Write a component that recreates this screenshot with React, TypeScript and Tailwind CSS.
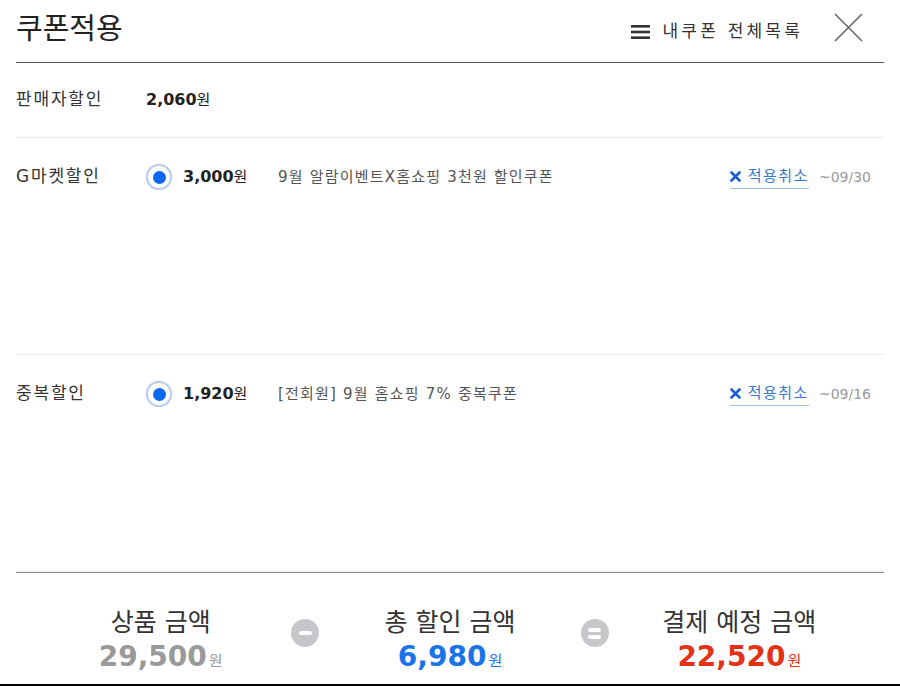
const FONT = '"DejaVu Sans", "Noto Sans CJK KR", sans-serif';

const Radio = () => (
    <span className="flex h-[26px] w-[26px] items-center justify-center rounded-full border-2 border-[#b8cde9] bg-white shadow-[0_0_2px_#d6e3f5]">
        <span className="h-[13px] w-[13px] rounded-full bg-[#0b66f0]" />
    </span>
);

const CancelLink = ({ until }: { until: string }) => (
    <div className="ml-auto flex items-center gap-[10px] pr-[13px]">
        <span className="flex items-center gap-[7px] border-b border-[#9cc0ea] pb-[1px] text-[15px] text-[#3a78c9]">
            <svg width="11" height="11" viewBox="0 0 11 11">
                <path d="M1.5 1.5 L9.5 9.5 M9.5 1.5 L1.5 9.5" stroke="#1a5fd2" strokeWidth="2.6" strokeLinecap="round" />
            </svg>
            <span className="tracking-[1.5px]">적용취소</span>
        </span>
        <span className="text-[14px] text-[#999]">~{until}</span>
    </div>
);

const CouponRow = ({ label, amount, desc, until }: { label: string; amount: string; desc: string; until: string }) => (
    <div className="flex h-[217px] items-start border-b border-[#ececec] pt-[26px]">
        <div className="flex h-[26px] w-full items-center">
            <span className="w-[130px] text-[17px] tracking-[1.8px] text-[#333]">{label}</span>
            <Radio />
            <span className="ml-[11px] w-[95px] text-[#222]">
                <b className="text-[16px]">{amount}</b>
                <span className="text-[15px]">원</span>
            </span>
            <span className="text-[15px] tracking-[1.2px] text-[#555]">{desc}</span>
            <CancelLink until={until} />
        </div>
    </div>
);

const OpCircle = ({ kind }: { kind: "minus" | "equals" }) => (
    <div className="flex w-0 justify-center pt-[46px]">
        <span className="flex h-[28px] w-[28px] shrink-0 flex-col items-center justify-center gap-[3px] rounded-full bg-[#c7c7cb]">
            <span className="h-[4px] w-[13px] rounded-full bg-white" />
            {kind === "equals" && <span className="h-[4px] w-[13px] rounded-full bg-white" />}
        </span>
    </div>
);

const Summary = ({ label, value, color }: { label: string; value: string; color: string }) => (
    <div className="flex flex-1 flex-col items-center pt-[33px]">
        <span className="text-[25px] leading-[34px] text-[#333]">{label}</span>
        <span className={`flex items-baseline leading-[34px] ${color}`}>
            <b className="text-[28px]">{value}</b>
            <span className="ml-[2px] text-[15px]">원</span>
        </span>
    </div>
);

export default function App() {
    return (
        <div className="h-[686px] w-[900px] bg-white" style={{ fontFamily: FONT }}>
            <div className="flex h-[686px] flex-col border-b-2 border-black px-4">
                <div className="flex h-[63px] items-start border-b border-[#555]">
                    <h1 className="pt-[10px] text-[29px] leading-[38px] text-[#222]">쿠폰적용</h1>
                    <div className="ml-auto flex items-center pt-[19px]">
                        <svg width="20" height="16" viewBox="0 0 20 16" className="mr-[12px]">
                            <rect x="0" y="1" width="19" height="2.6" fill="#333" />
                            <rect x="0" y="6.7" width="19" height="2.6" fill="#333" />
                            <rect x="0" y="12.4" width="19" height="2.6" fill="#333" />
                        </svg>
                        <span className="text-[17px] tracking-[3.2px] text-[#333]">내쿠폰 전체목록</span>
                    </div>
                    <div className="ml-[31px] mr-[21px] pt-[13px]">
                        <svg width="29" height="29" viewBox="0 0 29 29">
                            <path d="M1 1 L28 28 M28 1 L1 28" stroke="#666" strokeWidth="1.6" />
                        </svg>
                    </div>
                </div>

                <div className="flex h-[75px] items-center border-b border-[#ececec]">
                    <span className="w-[130px] text-[17px] tracking-[1.8px] text-[#333]">판매자할인</span>
                    <span className="text-[#222]">
                        <b className="text-[16px]">2,060</b>
                        <span className="text-[15px]">원</span>
                    </span>
                </div>

                <CouponRow label="G마켓할인" amount="3,000" desc="9월 알람이벤트X홈쇼핑 3천원 할인쿠폰" until="09/30" />
                <CouponRow label="중복할인" amount="1,920" desc="[전회원] 9월 홈쇼핑 7% 중복쿠폰" until="09/16" />

                <div className="flex flex-1 border-t border-[#888]">
                    <Summary label="상품 금액" value="29,500" color="text-[#999]" />
                    <OpCircle kind="minus" />
                    <Summary label="총 할인 금액" value="6,980" color="text-[#1a73e8]" />
                    <OpCircle kind="equals" />
                    <Summary label="결제 예정 금액" value="22,520" color="text-[#e33216]" />
                </div>
            </div>
        </div>
    );
}
